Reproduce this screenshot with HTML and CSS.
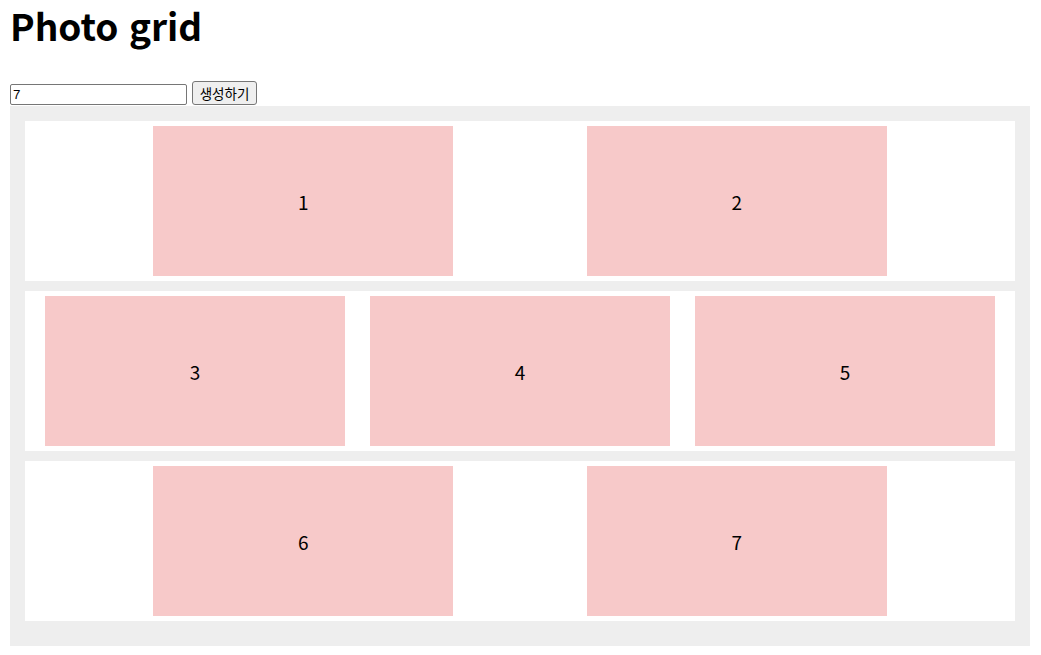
FILE: index.html
```html
<!DOCTYPE html>
<html lang="ko">
<head>
<meta charset="utf-8">
<title>Photo grid</title>
<link rel="stylesheet" href="styles.css">
</head>
<body>
<h1 class="title">Photo grid</h1>
<div class="controls">
  <input class="count" type="text" value="7">
  <button class="make" type="button">생성하기</button>
</div>
<div class="grid">
  <div class="row">
    <div class="photo">1</div>
    <div class="photo">2</div>
  </div>
  <div class="row">
    <div class="photo">3</div>
    <div class="photo">4</div>
    <div class="photo">5</div>
  </div>
  <div class="row">
    <div class="photo">6</div>
    <div class="photo">7</div>
  </div>
</div>
</body>
</html>
```

FILE: styles.css
```css
html, body {
  background: #ffffff;
}
body {
  margin: 0 10px;
  font-family: "Noto Sans CJK KR", "Noto Sans", sans-serif;
  color: #000;
}
.title {
  margin: 0;
  padding-top: 5px;
  font-size: 37px;
  line-height: 40px;
  font-weight: 700;
}
.controls {
  margin-top: 36px;
  display: flex;
  align-items: center;
  gap: 5px;
  height: 24px;
}
.count {
  box-sizing: border-box;
  width: 177px;
  height: 21px;
  margin: 2px 0 0;
  padding: 1px 2px;
  border: 1px solid #767676;
  border-radius: 2px;
  font-family: "Liberation Sans", Arial, sans-serif;
  font-size: 13.33px;
  color: #000;
}
.make {
  box-sizing: border-box;
  width: 65px;
  height: 24px;
  margin: 0;
  padding: 0 6px;
  border: 1px solid #767676;
  border-radius: 3px;
  background: #efefef;
  font-family: "Noto Sans CJK KR", sans-serif;
  font-size: 13.5px;
  line-height: 20px;
  color: #000;
}
.grid {
  margin-top: 1px;
  width: 1020px;
  box-sizing: border-box;
  background: #eeeeee;
  padding: 15px;
}
.row {
  display: flex;
  justify-content: space-evenly;
  gap: 25px;
  padding: 5px 20px;
  margin-bottom: 10px;
  background: #ffffff;
}
.photo {
  width: 300px;
  height: 150px;
  flex: 0 0 300px;
  background: #f7c9c9;
  display: flex;
  align-items: center;
  justify-content: center;
  font-size: 19px;
  line-height: 1;
}
```
